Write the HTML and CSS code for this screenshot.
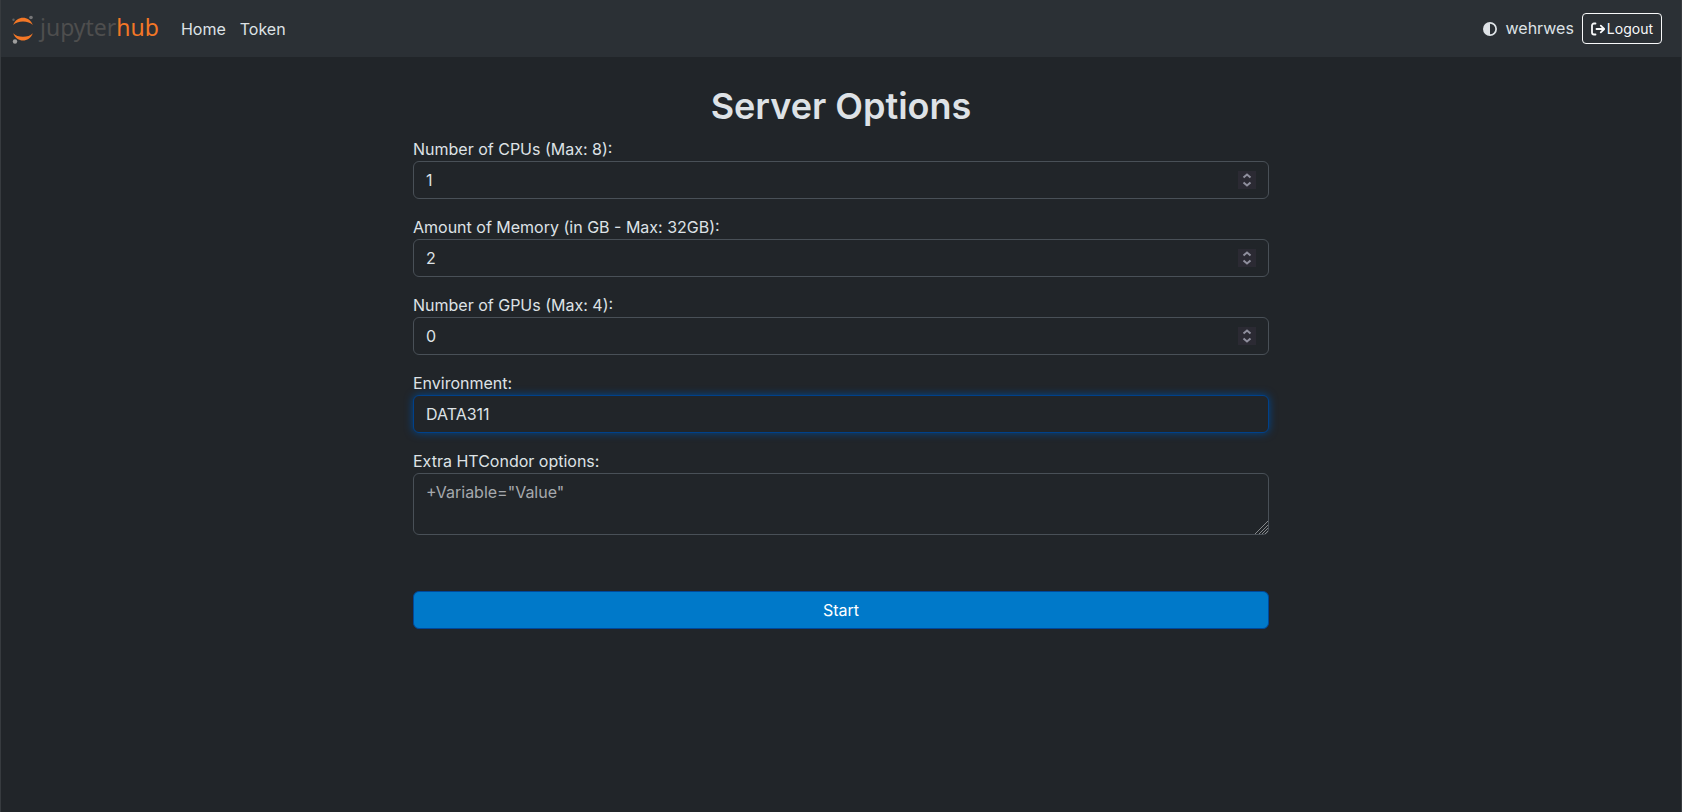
FILE: index.html
```html
<!DOCTYPE html>
<html lang="en">
<head>
<meta charset="utf-8">
<title>JupyterHub</title>
<link rel="stylesheet" href="styles.css">
</head>
<body>
<nav class="navbar">
  <a class="brand" href="#" aria-label="jupyterhub">
    <svg class="brand-mark" viewBox="0 0 24 32" width="24" height="32" aria-hidden="true">
      <path fill="#f37726" d="M2.200 12C4 7 8 4.700 12 4.700S20 7 21.800 12C19.800 9.600 16 8.400 12 8.400S4.200 9.600 2.200 12Z"/>
      <path fill="#f37726" d="M2.200 20.200C4 25.200 8 27.500 12 27.500S20 25.200 21.800 20.200C19.800 22.600 16 23.800 12 23.800S4.200 22.600 2.200 20.200Z"/>
      <circle cx="20" cy="4.500" r="1.800" fill="#767677"/>
      <circle cx="2.500" cy="6.800" r="1.200" fill="#616262"/>
      <circle cx="4" cy="28.500" r="2.200" fill="#9e9e9e"/>
    </svg>
    <span class="brand-text">jupyter<span class="brand-hub">hub</span></span>
  </a>
  <a class="nav-link" href="#">Home</a>
  <a class="nav-link" href="#">Token</a>
  <div class="nav-end">
    <button class="theme" type="button" aria-label="Toggle dark mode">
      <svg viewBox="0 0 16 16" width="14" height="14" aria-hidden="true"><circle cx="8" cy="8" r="7" fill="none" stroke="currentColor" stroke-width="2"/><path d="M8 1a7 7 0 0 0 0 14z" fill="currentColor"/></svg>
    </button>
    <span class="user">wehrwes</span>
    <a class="logout" href="#">
      <svg viewBox="0 0 14 14" width="14" height="14" fill="none" stroke="currentColor" stroke-width="1.800" stroke-linecap="round" stroke-linejoin="round" aria-hidden="true"><path d="M4.500 1.500H3A2 2 0 0 0 1 3.500v7a2 2 0 0 0 2 2h1.500M5.500 7H13M9.800 3.600L13.200 7L9.800 10.400"/></svg>Logout</a>
  </div>
</nav>
<main class="content">
  <h1 class="title">Server Options</h1>
  <form class="options">
    <div class="group">
      <label for="cpus">Number of CPUs (Max: 8):</label>
      <div class="field">
        <input class="control" id="cpus" type="number" min="1" max="8" value="1">
        <span class="spinner" aria-hidden="true"><svg viewBox="0 0 18 18" width="18" height="18"><path d="M5.500 6.500L9 3.500l3.500 3M5.500 11.500l3.500 3l3.500-3"/></svg></span>
      </div>
    </div>
    <div class="group">
      <label for="memory">Amount of Memory (in GB - Max: 32GB):</label>
      <div class="field">
        <input class="control" id="memory" type="number" min="1" max="32" value="2">
        <span class="spinner" aria-hidden="true"><svg viewBox="0 0 18 18" width="18" height="18"><path d="M5.500 6.500L9 3.500l3.500 3M5.500 11.500l3.500 3l3.500-3"/></svg></span>
      </div>
    </div>
    <div class="group">
      <label for="gpus">Number of GPUs (Max: 4):</label>
      <div class="field">
        <input class="control" id="gpus" type="number" min="0" max="4" value="0">
        <span class="spinner" aria-hidden="true"><svg viewBox="0 0 18 18" width="18" height="18"><path d="M5.500 6.500L9 3.500l3.500 3M5.500 11.500l3.500 3l3.500-3"/></svg></span>
      </div>
    </div>
    <div class="group">
      <label for="environment">Environment:</label>
      <select class="control active" id="environment"><option>DATA311</option></select>
    </div>
    <div class="group">
      <label for="extra">Extra HTCondor options:</label>
      <div class="field">
        <textarea class="control area" id="extra" rows="2" placeholder='+Variable="Value"'></textarea>
        <svg class="grip" viewBox="0 0 13 13" width="13" height="13" aria-hidden="true"><path d="M0 13L13 0M4 13L13 4M7 13L13 7M10 13L13 10"/></svg>
      </div>
    </div>
    <button class="start" type="submit">Start</button>
  </form>
</main>
</body>
</html>
```
FILE: styles.css
```css
* { box-sizing: border-box; }
body {
  margin: 0;
  min-height: 100vh;
  background: #212529;
  border-left: 1px solid #373b3f;
  border-right: 1px solid #373b3f;
  color: #dee2e6;
  font: 16px/24px Inter, "Liberation Sans", sans-serif;
}
.navbar {
  display: flex;
  align-items: center;
  height: 57px;
  padding: 0 19px 0 10px;
  background: #2b3035;
}
.brand {
  display: flex;
  align-items: center;
  gap: 5px;
  margin-right: 15px;
  text-decoration: none;
}
.brand-mark { display: block; }
.brand-text {
  padding-bottom: 4px;
  color: #4e4e4e;
  font: 400 23px/28px "Noto Sans", "Open Sans", sans-serif;
}
.brand-hub { color: #f37726; }
.nav-link {
  padding: 8px 7px;
  color: #dee2e6;
  text-decoration: none;
}
.nav-end {
  display: flex;
  align-items: center;
  gap: 8px;
  margin-left: auto;
}
.theme {
  display: flex;
  padding: 2px 1px;
  border: 0;
  background: none;
  color: #dee2e6;
}
.user { padding-bottom: 2px; }
.logout {
  display: flex;
  align-items: center;
  gap: 2px;
  padding: 4px 8px;
  border: 1px solid #f8f9fa;
  border-radius: 4px;
  color: #f8f9fa;
  font-size: 14px;
  line-height: 21px;
  text-decoration: none;
}
.content {
  max-width: 888px;
  margin: 0 auto;
  padding: 25px 16px;
}
.title {
  margin: 0 0 7px;
  font-size: 36px;
  font-weight: 600;
  line-height: 48px;
  text-align: center;
}
.group { margin-bottom: 16px; }
.group label { display: block; }
.field { position: relative; }
.control {
  display: block;
  width: 100%;
  height: 38px;
  padding: 6px 12px;
  border: 1px solid #495057;
  border-radius: 6px;
  outline: 0;
  appearance: none;
  background: #212529;
  color: #dee2e6;
  font: inherit;
}
.control[type="number"] { appearance: textfield; }
.control::-webkit-inner-spin-button { display: none; }
.control::placeholder { color: #a6a9ad; }
.active {
  border-color: #00418a;
  box-shadow: 0 0 8px #00478f;
}
.area {
  height: 62px;
  resize: none;
}
.spinner {
  position: absolute;
  top: 10px;
  right: 13px;
  width: 18px;
  height: 18px;
  background: #2b2a33;
  pointer-events: none;
}
.spinner svg {
  display: block;
  fill: none;
  stroke: #8f8f9d;
  stroke-width: 2;
}
.grip {
  position: absolute;
  right: 1px;
  bottom: 1px;
  fill: none;
  stroke: #85888a;
  pointer-events: none;
}
.start {
  display: block;
  width: 100%;
  height: 38px;
  margin-top: 56px;
  border: 1px solid #00489a;
  border-radius: 6px;
  background: #0079c9;
  color: #fff;
  font: inherit;
}
```
